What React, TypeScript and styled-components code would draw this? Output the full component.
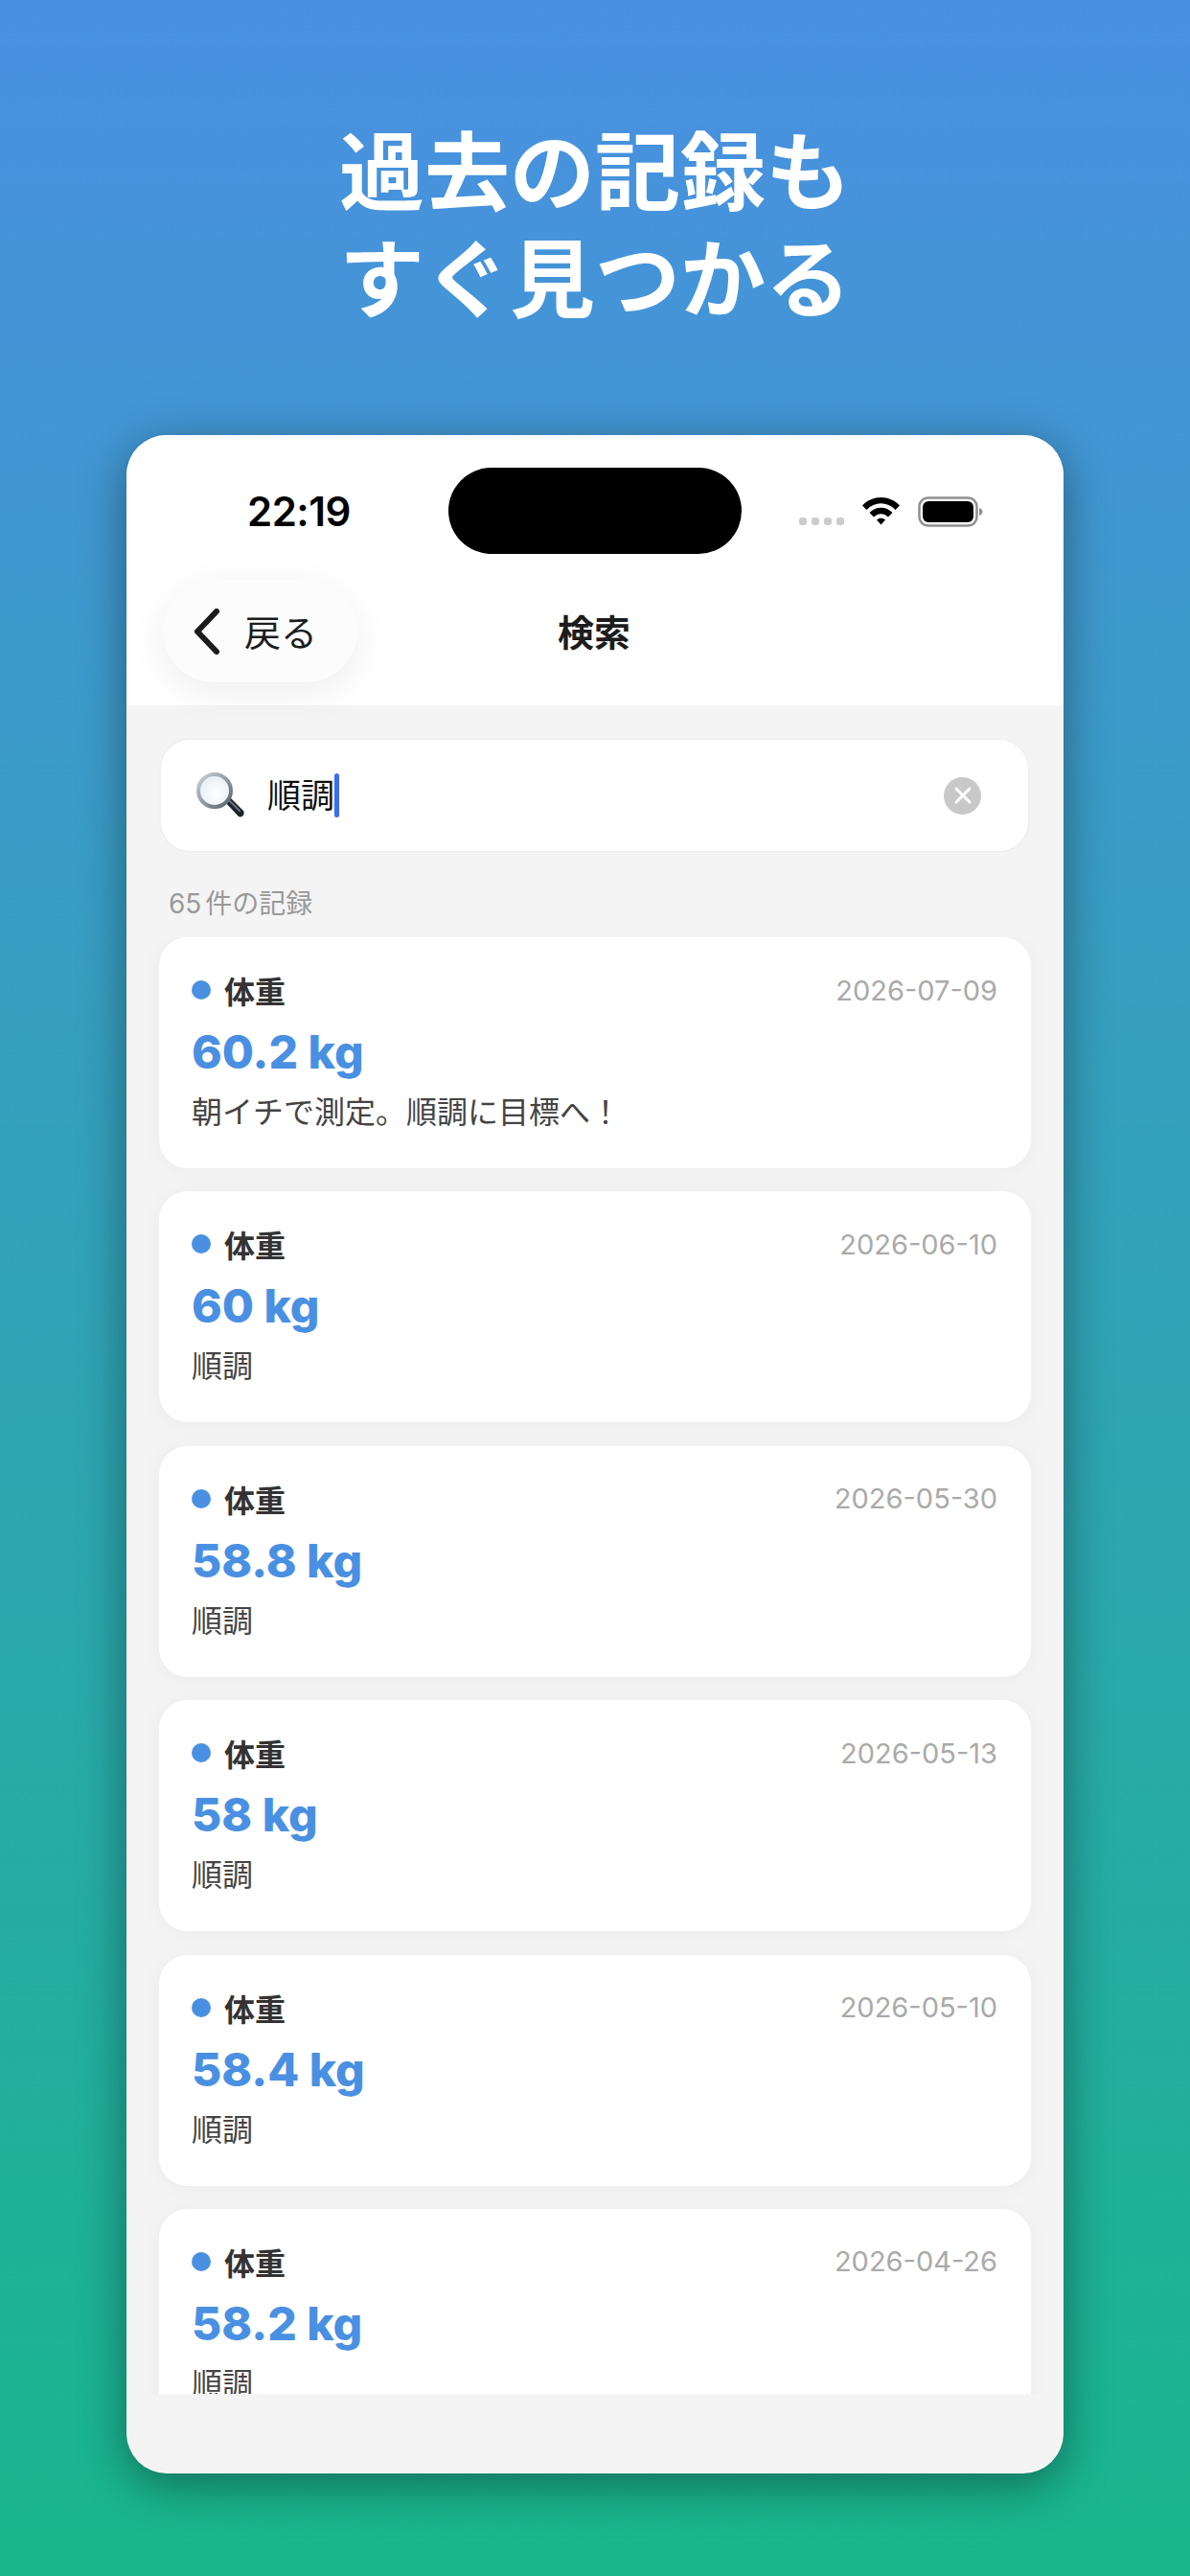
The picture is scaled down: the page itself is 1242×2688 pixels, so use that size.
import React, { FC } from 'react';
import styled, { createGlobalStyle } from 'styled-components';

const JP = `Inter, "Noto Sans CJK JP", sans-serif`;

const GlobalStyle = createGlobalStyle`
    html, body {
        margin: 0;
        padding: 0;
    }
    * {
        box-sizing: border-box;
    }
`;

const records = [
    { value: '60.2 kg', date: '2026-07-09', note: '朝イチで測定。順調に目標へ！' },
    { value: '60 kg', date: '2026-06-10', note: '順調' },
    { value: '58.8 kg', date: '2026-05-30', note: '順調' },
    { value: '58 kg', date: '2026-05-13', note: '順調' },
    { value: '58.4 kg', date: '2026-05-10', note: '順調' },
    { value: '58.2 kg', date: '2026-04-26', note: '順調' },
];

const WifiIcon: FC = () => (
    <svg width="41" height="30" viewBox="0 0 40 30">
        <path d="M0.5 9.5 C11 -2 29 -2 39.5 9.5 L35 14 C26.5 5 13.5 5 5 14 Z" fill="#000" />
        <path d="M8 17 C14.5 10 25.5 10 32 17 L27.5 21.5 C23.5 17 16.5 17 12.5 21.5 Z" fill="#000" />
        <path d="M15.5 24.5 C18 22 22 22 24.5 24.5 L20 29.5 Z" fill="#000" />
    </svg>
);

const BatteryIcon: FC = () => (
    <svg width="68" height="32" viewBox="0 0 68 32">
        <rect x="1.5" y="1.5" width="60" height="29" rx="9" fill="none" stroke="#8e8e8e" strokeWidth="2.5" />
        <rect x="5" y="5" width="53" height="22" rx="6" fill="#000" />
        <path d="M64 12 C66.5 13 67.5 14.5 67.5 16 C67.5 17.5 66.5 19 64 20 Z" fill="#8e8e8e" />
    </svg>
);

const BackIcon: FC = () => (
    <svg width="30" height="48" viewBox="0 0 30 48">
        <path d="M25 3 L5 24 L25 45" fill="none" stroke="#1c1c1c" strokeWidth="6" strokeLinecap="round" strokeLinejoin="round" />
    </svg>
);

const MagnifierIcon: FC = () => (
    <svg width="52" height="50" viewBox="0 0 52 50">
        <defs>
            <radialGradient id="lens" cx="55%" cy="60%" r="60%">
                <stop offset="0%" stopColor="#ffffff" />
                <stop offset="100%" stopColor="#e6eef5" />
            </radialGradient>
            <linearGradient id="rim" x1="0" y1="0" x2="1" y2="1">
                <stop offset="0%" stopColor="#c9d3da" />
                <stop offset="100%" stopColor="#59626a" />
            </linearGradient>
        </defs>
        <path d="M30 31 L35 26 L50 41 C52 44 49 49 45 47 Z" fill="#1f242a" />
        <path d="M36 31 L46 41" stroke="#6d7680" strokeWidth="2" strokeLinecap="round" />
        <circle cx="20" cy="20" r="17" fill="url(#lens)" stroke="url(#rim)" strokeWidth="4" />
    </svg>
);

export default function App() {
    return (
        <Page>
            <GlobalStyle />
            <Title>
                過去の記録も
                <br />
                すぐ見つかる
            </Title>
            <Phone>
                <Header>
                    <StatusBar>
                        <Clock>22:19</Clock>
                        <Island />
                        <StatusIcons>
                            <SignalDots>
                                <i />
                                <i />
                                <i />
                                <i />
                            </SignalDots>
                            <WifiIcon />
                            <BatteryIcon />
                        </StatusIcons>
                    </StatusBar>
                    <NavBar>
                        <BackButton>
                            <BackIcon />
                            <BackLabel>戻る</BackLabel>
                        </BackButton>
                        <NavTitle>検索</NavTitle>
                    </NavBar>
                </Header>
                <Body>
                    <SearchBox>
                        <MagnifierIcon />
                        <SearchText>順調</SearchText>
                        <Caret />
                        <ClearButton>
                            <svg width="20" height="20" viewBox="0 0 20 20">
                                <path d="M3 3 L17 17 M17 3 L3 17" stroke="#fff" strokeWidth="3" strokeLinecap="round" />
                            </svg>
                        </ClearButton>
                    </SearchBox>
                    <Count>65 件の記録</Count>
                    <List>
                        {records.map((r) => (
                            <Card key={r.date}>
                                <CardTop>
                                    <Dot />
                                    <Kind>体重</Kind>
                                    <DateText>{r.date}</DateText>
                                </CardTop>
                                <Value>{r.value}</Value>
                                <Note>{r.note}</Note>
                            </Card>
                        ))}
                    </List>
                    <BottomSpace />
                </Body>
            </Phone>
        </Page>
    );
}

const Page = styled.div`
    width: 1242px;
    height: 2688px;
    overflow: hidden;
    display: flex;
    flex-direction: column;
    align-items: center;
    padding-top: 124px;
    background: linear-gradient(180deg, #4a90e2 0%, #18b68c 100%);
    font-family: ${JP};
`;

const Title = styled.h1`
    margin: 0 0 106px;
    height: 224px;
    font-size: 89px;
    line-height: 112px;
    font-weight: 700;
    color: #fff;
    text-align: center;
`;

const Phone = styled.div`
    width: 978px;
    height: 2127px;
    display: flex;
    flex-direction: column;
    border-radius: 42px;
    overflow: hidden;
    background: #f4f4f4;
    box-shadow: 0 12px 50px rgba(0, 0, 0, 0.4);
`;

const Header = styled.div`
    height: 282px;
    flex-shrink: 0;
    background: #fff;
`;

const StatusBar = styled.div`
    height: 151px;
    padding: 34px 0 0 126px;
    display: flex;
    align-items: flex-start;
`;

const Clock = styled.div`
    width: 106px;
    margin-top: 20px;
    font-family: Inter, sans-serif;
    font-size: 42px;
    line-height: 52px;
    font-weight: 600;
    letter-spacing: -0.5px;
    color: #000;
`;

const Island = styled.div`
    width: 306px;
    height: 90px;
    margin-left: 104px;
    border-radius: 45px;
    background: #000;
`;

const StatusIcons = styled.div`
    margin: 30px 0 0 60px;
    display: flex;
    align-items: flex-start;
    gap: 18px;
`;

const SignalDots = styled.div`
    display: flex;
    gap: 5px;
    margin-top: 22px;

    i {
        display: block;
        width: 8px;
        height: 8px;
        border-radius: 3px;
        background: #cccccc;
    }
`;

const NavBar = styled.div`
    position: relative;
    height: 107px;
    margin-left: 38px;
    display: flex;
    align-items: center;
`;

const BackButton = styled.div`
    position: relative;
    z-index: 1;
    width: 203px;
    height: 107px;
    padding-left: 31px;
    display: flex;
    align-items: center;
    gap: 24px;
    border-radius: 54px;
    background: #fcfcfc;
    box-shadow: 0 10px 40px rgba(0, 0, 0, 0.07);
`;

const BackLabel = styled.span`
    margin-top: -3px;
    font-size: 38px;
    color: #1c1c1c;
`;

const NavTitle = styled.div`
    margin: -3px 0 0 209px;
    font-size: 38px;
    font-weight: 600;
    color: #1c1c1c;
`;

const Body = styled.div`
    flex: 1;
    min-height: 0;
    display: flex;
    flex-direction: column;
    padding: 36px 34px 0;
`;

const SearchBox = styled.div`
    width: 905px;
    height: 116px;
    margin-left: 2px;
    padding: 0 49px 0 36px;
    flex-shrink: 0;
    display: flex;
    align-items: center;
    border-radius: 30px;
    background: #fff;
    box-shadow: 0 0 3px rgba(0, 0, 0, 0.08);
`;

const SearchText = styled.span`
    margin-left: 23px;
    font-size: 35px;
    line-height: 46px;
    color: #111;
`;

const Caret = styled.span`
    width: 5px;
    height: 46px;
    border-radius: 3px;
    background: #3d6bf2;
`;

const ClearButton = styled.span`
    width: 39px;
    height: 39px;
    margin-left: auto;
    display: flex;
    align-items: center;
    justify-content: center;
    border-radius: 50%;
    background: #c8c8c8;
`;

const Count = styled.div`
    margin: 35px 0 0 10px;
    height: 55px;
    font-size: 28px;
    line-height: 40px;
    word-spacing: -4px;
    color: #999;
    flex-shrink: 0;
`;

const List = styled.div`
    flex: 1;
    min-height: 0;
    overflow: hidden;
    display: flex;
    flex-direction: column;
    gap: 24.4px;
    margin: 0 -34px;
    padding: 0 34px;
`;

const Card = styled.div`
    height: 241px;
    flex-shrink: 0;
    padding: 32px 35px 0 34px;
    border-radius: 30px;
    background: #fff;
    box-shadow: 0 2px 24px rgba(0, 0, 0, 0.04);
`;

const CardTop = styled.div`
    height: 46px;
    display: flex;
    align-items: center;
`;

const Dot = styled.span`
    width: 20px;
    height: 20px;
    border-radius: 50%;
    background: #4a90e2;
`;

const Kind = styled.span`
    margin-left: 14px;
    font-size: 32px;
    font-weight: 600;
    color: #333;
`;

const DateText = styled.span`
    margin-left: auto;
    font-family: Inter, sans-serif;
    font-size: 29px;
    color: #aaa;
`;

const Value = styled.div`
    margin-top: 10px;
    font-family: Inter, sans-serif;
    font-size: 48px;
    line-height: 64px;
    font-weight: 800;
    color: #4a90e2;
`;

const Note = styled.div`
    margin-top: 9px;
    font-size: 32px;
    line-height: 44px;
    color: #444;
`;

const BottomSpace = styled.div`
    height: 83px;
    flex-shrink: 0;
`;
